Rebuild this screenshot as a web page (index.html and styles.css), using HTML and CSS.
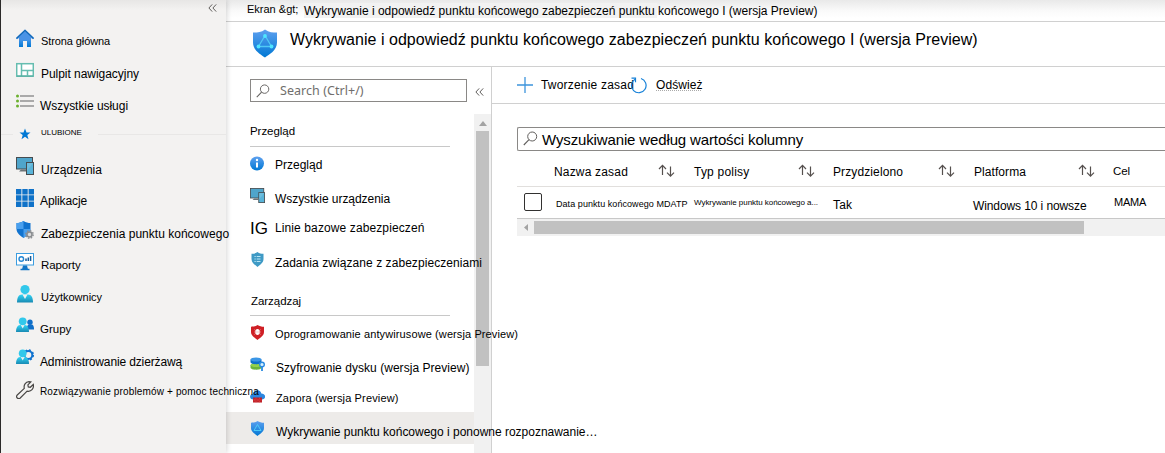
FILE: index.html
```html
<!DOCTYPE html>
<html lang="pl">
<head>
<meta charset="utf-8">
<title>Wykrywanie i odpowiedź punktu końcowego</title>
<link rel="stylesheet" href="styles.css">
</head>
<body>
<svg class="defs" width="0" height="0">
  <defs>
    <linearGradient id="blue" x1="0" y1="0" x2="0" y2="1"><stop offset="0" stop-color="#5ea0ef"/><stop offset="1" stop-color="#0078d4"/></linearGradient>
    <linearGradient id="cyan" x1="0" y1="0" x2="0" y2="1"><stop offset="0" stop-color="#32d4f5"/><stop offset="1" stop-color="#198ab3"/></linearGradient>
    <symbol id="devices" viewBox="0 0 18 18"><rect x="0.500" y="0.500" width="16" height="11.500" fill="#4fa5cb" stroke="#454c50"/><path d="M5 12.500h5v2H3z" fill="#6c7478"/><rect x="10.500" y="5.500" width="7" height="12" fill="#59b4d9" stroke="#454c50"/><path d="M11 6h6L11 14z" fill="#83c8e4" opacity=".5"/></symbol>
    <symbol id="edr" viewBox="0 0 24 28"><path d="M12 0C8 3 4 3 0 3v10c0 8 8 12 12 15 4-3 12-7 12-15V3C20 3 16 3 12 0z" fill="url(#blue)"/><path d="M12 6L5.500 17h13z" fill="none" stroke="#50c8f5" stroke-width="1.300"/><circle cx="12" cy="6.500" r="1.900" fill="#50e6ff"/><circle cx="5.500" cy="17" r="1.900" fill="#50e6ff"/><circle cx="18.500" cy="17" r="1.900" fill="#50e6ff"/></symbol>
    <symbol id="edr-small" viewBox="0 0 15 15"><path d="M7.500 0C5.500 1.400 3.500 1.700 1 1.700V7c0 4 4.500 6 6.500 8 2-2 6.500-4 6.500-8V1.700c-2.500 0-4.500-.3-6.500-1.700z" fill="url(#blue)"/><path d="M7.500 3.500L4 9.500h7z" fill="none" stroke="#50d0fa" stroke-width=".9"/></symbol>
    <symbol id="lens" viewBox="0 0 15 15"><circle cx="9.200" cy="5.500" r="4.500" fill="none" stroke="#605e5c"/><path d="M6 8.700L.8 14" stroke="#605e5c" stroke-width="1.100"/></symbol>
    <symbol id="sort" viewBox="0 0 17 14"><path d="M4.500 11V1.500M1 5l3.500-3.700L8 5M12.500 2.500V12M9 8.600l3.500 3.600L16 8.600" fill="none" stroke="#55504e" stroke-width="1.200"/></symbol>
    <symbol id="chev" viewBox="0 0 9 8"><path d="M4.200.4L.9 4l3.300 3.600M8.200.4L4.900 4l3.300 3.600" fill="none" stroke="#605e5c"/></symbol>
  </defs>
</svg>
<div class="app">
  <nav class="side">
    <div class="side-top"><svg class="collapse"><use href="#chev"/></svg></div>
    <a class="nav"><svg class="ic" viewBox="0 0 18 18"><path d="M3 8h12v10h-4v-6H7v6H3z" fill="url(#blue)"/><path d="M9 .5L0 9l1 1.200L3 9v2h12V9l2 1.200L18 9z" fill="#4a93e6"/><path d="M.4 9.500L9 1.300l8.600 8.200" fill="none" stroke="#1268b5" stroke-width="1.300"/></svg><span class="tx n1">Strona główna</span></a>
    <a class="nav"><svg class="ic" viewBox="0 0 18 18"><rect x=".7" y="2.700" width="16.600" height="12.500" fill="#fff" stroke="#65bdb0" stroke-width="1.500"/><path d="M5.500 3v12M6 9.500h11M11.500 9.500v5" stroke="#65bdb0" stroke-width="1.500"/><path d="M1 15h16" stroke="#51a99c"/></svg><span class="tx n2">Pulpit nawigacyjny</span></a>
    <a class="nav"><svg class="ic" viewBox="0 0 18 18"><path d="M4 4h14M4 9h14M4 14h14" transform="translate(0 -1)" stroke="#939393" stroke-width="1.400"/><g fill="#6bb02e"><circle cx="1.500" cy="3" r="1.500"/><circle cx="1.500" cy="8" r="1.500"/><circle cx="1.500" cy="13" r="1.500"/></g></svg><span class="tx n3">Wszystkie usługi</span></a>
    <div class="nav fav"><i class="fav-line start"></i><svg class="ic star" viewBox="0 0 12 12"><path d="M6 .5l1.500 4h4L8.300 7l1.200 4.200L6 8.700l-3.500 2.500L3.700 7 .5 4.500h4z" fill="#0078d4"/></svg><span class="tx n4">ULUBIONE</span><i class="fav-line"></i></div>
    <a class="nav"><svg class="ic"><use href="#devices"/></svg><span class="tx n5">Urządzenia</span></a>
    <a class="nav"><svg class="ic" viewBox="0 0 18 18"><path d="M0 0h5.400v5.400H0zM6.300 0h5.400v5.400H6.300zM12.600 0H18v5.400h-5.400zM0 6.300h5.400v5.400H0zM6.300 6.300h5.400v5.400H6.300zM12.600 6.300H18v5.400h-5.400zM0 12.600h5.400V18H0zM6.300 12.600h5.400V18H6.300zM12.600 12.600H18V18h-5.400z" fill="#0f72c8"/></svg><span class="tx n6">Aplikacje</span></a>
    <a class="nav"><svg class="ic" viewBox="0 0 18 18"><path d="M7.500 0C5 1.600 3 2 .5 2v6c0 4.500 4.500 7 7 9 2.500-2 7-4.500 7-9V2C12 2 10 1.600 7.500 0z" fill="#1173cf"/><path d="M7.500 0C5 1.600 3 2 .5 2v6h7zM7.500 8h7c0 4.500-4.500 7-7 9z" fill="#4aa0ee"/><circle cx="13.500" cy="13.500" r="2.500" fill="#dcdcdc" stroke="#8b8e91" stroke-width="1.600"/><circle cx="13.500" cy="13.500" r="3.700" fill="none" stroke="#8b8e91" stroke-width="1.400" stroke-dasharray="1.500 1.400"/></svg><span class="tx n7">Zabezpieczenia punktu końcowego</span></a>
    <a class="nav"><svg class="ic" viewBox="0 0 18 18"><rect x=".5" y=".5" width="17" height="11.500" fill="#fff" stroke="#3b9de0"/><path d="M7 12.500h4l1 4H6z" fill="#1175c6"/><path d="M4.500 16.500h9" stroke="#1175c6" stroke-width="1.500"/><circle cx="5.300" cy="6" r="2.300" fill="none" stroke="#2487d4" stroke-width="1.400"/><path d="M10 8V5.500M12.300 8V4.500M14.600 8V3" stroke="#155d9c" stroke-width="1.500"/></svg><span class="tx n8">Raporty</span></a>
    <a class="nav"><svg class="ic" viewBox="0 0 18 18"><path d="M1 17.500c0-5 1.500-8 5-8h6c3.500 0 5 3 5 8z" fill="url(#cyan)"/><path d="M6.500 9.500L9 14l2.500-4.500z" fill="#f3f2f1"/><circle cx="9" cy="4.600" r="4.600" fill="#32c8eb"/></svg><span class="tx n9">Użytkownicy</span></a>
    <a class="nav"><svg class="ic" viewBox="0 0 18 18"><path d="M10.500 12.500c0-3 1-5 3-5h2c2 0 2.500 2 2.500 5z" fill="#0f6fc9"/><circle cx="14" cy="5.200" r="2.700" fill="#0f6fc9"/><path d="M0 15c0-4 1.500-7 4-7h5c2.500 0 4 3 4 7z" fill="url(#cyan)"/><path d="M4.800 8l1.900 3.500L8.600 8z" fill="#f3f2f1"/><circle cx="6.700" cy="4.300" r="3.900" fill="#32c8eb"/></svg><span class="tx n10">Grupy</span></a>
    <a class="nav"><svg class="ic" viewBox="0 0 18 18"><circle cx="12.300" cy="6" r="4" fill="none" stroke="#1173cf" stroke-width="2"/><circle cx="12.300" cy="6" r="5" fill="none" stroke="#1173cf" stroke-width="1.500" stroke-dasharray="2 1.930"/><path d="M0 15c0-4 1.500-7 4-7h5c2.500 0 4 3 4 7z" fill="url(#cyan)"/><path d="M4.800 8l1.900 3.500L8.600 8z" fill="#f3f2f1"/><circle cx="6.700" cy="4.300" r="3.900" fill="#32c8eb"/></svg><span class="tx n11">Administrowanie dzierżawą</span></a>
    <a class="nav"><svg class="ic" viewBox="0 0 18 18"><path d="M1 14.300L8.300 7.400C7.500 4 9.500.8 13 .6l1.800.3-2.900 3 .4 2 2 .4 3-2.800c.9 4-2.200 7.600-6.200 6.600L4 17.200c-2 1.400-4.400-1-3-2.900z" fill="none" stroke="#484644" stroke-width="1.200"/></svg><span class="tx n12">Rozwiązywanie problemów + pomoc techniczna</span></a>
  </nav>
  <div class="page">
    <header class="crumbs"><span class="tx c1">Ekran &amp;gt;</span><span class="tx c2">Wykrywanie i odpowiedź punktu końcowego zabezpieczeń punktu końcowego I (wersja Preview)</span></header>
    <div class="title"><svg class="title-ic"><use href="#edr"/></svg><h1 class="tx h">Wykrywanie i odpowiedź punktu końcowego zabezpieczeń punktu końcowego I (wersja Preview)</h1></div>
    <div class="body">
      <aside class="menu">
        <div class="menu-search"><div class="search"><svg class="lens"><use href="#lens"/></svg><span class="tx ph">Search (Ctrl+/)</span></div><svg class="collapse"><use href="#chev"/></svg></div>
        <div class="menu-main">
          <div class="list">
            <div class="sect"><span class="tx s1">Przegląd</span></div>
            <a class="item"><svg class="mi" viewBox="0 0 15 15"><circle cx="7" cy="7.500" r="7" fill="url(#blue)"/><path d="M7 6.500v5" stroke="#fff" stroke-width="2"/><circle cx="7" cy="4" r="1.200" fill="#fff"/></svg><span class="tx m1">Przegląd</span></a>
            <a class="item"><svg class="mi"><use href="#devices"/></svg><span class="tx m2">Wszystkie urządzenia</span></a>
            <a class="item"><span class="ig">IG</span><span class="tx m3">Linie bazowe zabezpieczeń</span></a>
            <a class="item"><svg class="mi" viewBox="0 0 15 15"><path d="M7.500 0C5.500 1.500 4 1.800 1.500 1.800V7c0 4 4 6 6 8 2-2 6-4 6-8V1.800C11 1.800 9.500 1.500 7.500 0z" fill="#3f9ac5"/><path d="M4.500 4.500h1.200m1 0h3.800M4.500 7h1.200m1 0h3.800M4.500 9.500h1.200m1 0h3.800" stroke="#b9e6f5" stroke-width="1.100"/></svg><span class="tx m4">Zadania związane z zabezpieczeniami</span></a>
            <div class="sect second"><span class="tx s2">Zarządzaj</span></div>
            <a class="item low"><svg class="mi" viewBox="0 0 15 15"><path d="M7.500 0C5.500 1.400 3.500 1.700 1 1.700V7c0 4 4.500 6 6.500 8 2-2 6.500-4 6.500-8V1.700c-2.500 0-4.500-.3-6.500-1.700z" fill="#cf1f25"/><ellipse cx="7.500" cy="7" rx="2.200" ry="3" fill="#fff"/><path d="M4.300 4.500l6.400 5M10.700 4.500l-6.400 5M4 7h7" stroke="#f6c9c9" stroke-width=".5"/></svg><span class="tx m5">Oprogramowanie antywirusowe (wersja Preview)</span></a>
            <a class="item low"><svg class="mi" viewBox="0 0 15 15"><path d="M.5 8v2.500c0 3 11 3 11 0V8z" fill="#6bb53a"/><ellipse cx="6" cy="8" rx="5.500" ry="2" fill="#94d04c"/><path d="M.5 2.500V5c0 3 11 3 11 0V2.500z" fill="#0f6fc9"/><ellipse cx="6" cy="2.500" rx="5.500" ry="2" fill="#3b96e6"/><circle cx="12" cy="7.500" r="2.300" fill="#d8f1ff" stroke="#2b8be0" stroke-width="1.400"/><path d="M12 9.500V14" stroke="#2b8be0" stroke-width="1.800"/></svg><span class="tx m6">Szyfrowanie dysku (wersja Preview)</span></a>
            <a class="item low"><svg class="mi" viewBox="0 0 15 15"><path d="M3.500 10.500C-1 10.500-1 5 3 5 3.500.2 10.500 0 11.300 4.500c5 0 5 6 .7 6z" fill="#2b86df"/><path d="M3 8.500h9v5H3z" fill="#b81920"/><path d="M3 10.200h9M3 11.900h9M6 8.500v1.700M9.500 8.500v1.700M4.800 10.200v1.700M8 10.200v1.700M6 11.900v1.600M9.500 11.900v1.600" stroke="#e94f52" stroke-width=".5"/></svg><span class="tx m7">Zapora (wersja Preview)</span></a>
            <a class="item low on"><svg class="mi"><use href="#edr-small"/></svg><span class="tx m8">Wykrywanie punktu końcowego i ponowne rozpoznawanie…</span></a>
          </div>
          <div class="vbar"><i class="up"></i><i class="vthumb"></i></div>
        </div>
      </aside>
      <main class="pane">
        <div class="tools">
          <svg class="plus" viewBox="0 0 16 16"><path d="M8 0v16M0 8h16" stroke="#3d94dc" stroke-width="1.300"/></svg><span class="tx b1">Tworzenie zasad</span>
          <svg class="reload" viewBox="0 0 17 17"><path d="M11 1.500A7.300 7.300 0 1 1 5 2.200" fill="none" stroke="#1580d8" stroke-width="1.200"/><path d="M1.500 1.200h4v4" fill="none" stroke="#1580d8" stroke-width="1.200"/></svg><span class="tx b2">Odśwież</span>
        </div>
        <div class="grid">
          <div class="filter"><svg class="lens"><use href="#lens"/></svg><span class="tx f">Wyszukiwanie według wartości kolumny</span></div>
          <div class="tr th"><span></span>
            <div class="td"><span class="tx t1">Nazwa zasad</span><svg class="sort"><use href="#sort"/></svg></div>
            <div class="td"><span class="tx t2">Typ polisy</span><svg class="sort"><use href="#sort"/></svg></div>
            <div class="td"><span class="tx t3">Przydzielono</span><svg class="sort"><use href="#sort"/></svg></div>
            <div class="td"><span class="tx t4">Platforma</span><svg class="sort"><use href="#sort"/></svg></div>
            <div class="td"><span class="tx t5">Cel</span></div>
          </div>
          <div class="tr row"><span class="check"></span>
            <div class="td"><span class="tx r1">Data punktu końcowego MDATP</span></div>
            <div class="td"><span class="tx r2">Wykrywanie punktu końcowego a...</span></div>
            <div class="td"><span class="tx r3">Tak</span></div>
            <div class="td"><span class="tx r4">Windows 10 i nowsze</span></div>
            <div class="td"><span class="tx r5">MAMA</span></div>
          </div>
          <div class="hbar"><i class="left"></i><i class="hthumb"></i></div>
        </div>
      </main>
    </div>
  </div>
</div>
</body>
</html>
```
FILE: styles.css
```css
* { box-sizing: border-box; }
body { margin: 0; background: #fff; color: #000; font: 12px/16px "Liberation Sans", Arial, sans-serif; }
.defs { display: block; height: 0; }
.app { display: grid; grid-template-columns: 226px 939px; width: 1165px; height: 453px; overflow: hidden; }
.tx { white-space: pre; flex: none; display: block; }
svg { flex: none; display: block; }
.collapse { width: 9px; height: 8px; }

/* Sidebar */
.side { position: relative; z-index: 2; background: linear-gradient(#e7e6e5, #f3f2f1 10px); border-left: 1px solid #2b2a29; box-shadow: 1px 0 5px rgba(0,0,0,.16); }
.side-top { height: 22px; padding: 4px 0 0 207px; }
.nav { display: flex; height: 32px; padding-left: 15px; }
.ic { width: 18px; height: 18px; margin: 7px 6px 0 0; }
.nav .tx { margin-top: 11px; padding-left: 1px; }
.nav .n1 { font-size: 11px; letter-spacing: -.1px; }
.nav .n2 { margin-top: 12px; letter-spacing: -.04px; }
.nav .n3 { margin-top: 12px; padding-left: 0; letter-spacing: -.043px; }
.nav .n4 { font-size: 8px; margin-top: 7px; }
.nav .n5 { margin-top: 12px; letter-spacing: .03px; }
.nav .n6 { padding-left: 0; letter-spacing: -.115px; }
.nav .n7 { margin-top: 12px; letter-spacing: .02px; }
.nav .n8 { font-size: 11.5px; letter-spacing: -.1px; }
.nav .n9 { font-size: 11px; }
.nav .n10 { font-size: 11.5px; padding-left: 0; }
.nav .n11 { margin-top: 12px; padding-left: 0; letter-spacing: -.136px; }
.nav .n12 { font-size: 10px; margin-top: 10px; padding-left: 0; letter-spacing: .15px; }
.fav { padding-left: 0; }
.nav .star { width: 12px; height: 12px; margin: 10px 9px 0 6px; }
.fav-line { flex: 1; height: 1px; background: #e8e7e6; margin: 16px 0 0 16px; }
.start { flex: none; width: 12px; margin-left: 0; }

/* Page header */
.page { display: flex; flex-direction: column; }
.crumbs { display: flex; height: 22px; border-bottom: 1px solid #d0d0d0; background: linear-gradient(#e9e9e9, #fafafa 11px, #fff 18px); padding-left: 21px; }
.c1 { margin-top: 1px; width: 57px; font-size: 11px; }
.c2 { height: 15px; margin-top: 3px; background: linear-gradient(90deg, #f2f2f2 353px, transparent 353px); }
.title { display: flex; height: 45px; border-bottom: 1px solid #d0d0d0; padding: 7px 0 0 27px; }
.title-ic { width: 24px; height: 29px; margin-right: 13px; }
.h { margin: 0; font-size: 16px; font-weight: 400; line-height: 22px; letter-spacing: .035px; }
.body { display: flex; height: 386px; }

/* Blade menu */
.menu { width: 266px; border-right: 1px solid #d0d0d0; }
.menu-search { display: flex; height: 47px; padding: 12px 0 0 24px; }
.menu-search .collapse { margin: 9px 0 0 8px; }
.search { display: flex; width: 217px; height: 23px; border: 1px solid #8a8886; padding-left: 5px; }
.search .lens { width: 14px; height: 14px; margin: 4px 10px 0 0; }
.ph { font: 12.5px/16px "Noto Sans", sans-serif; color: #706e6c; margin-top: 3px; letter-spacing: .05px; }
.menu-main { display: flex; height: 339px; }
.list { position: relative; z-index: 1; width: 248px; }
.sect { width: 200px; height: 33px; margin: 0 0 1px 24px; border-bottom: 1px solid #c8c8c8; padding-top: 9px; }
.second { height: 40px; margin-bottom: 0; padding: 17px 0 0 1px; }
.s1, .s2 { font-size: 11.5px; letter-spacing: -.05px; }
.item { display: flex; height: 32px; padding-left: 24px; }
.mi { width: 15px; height: 15px; margin: 8px 10px 0 0; }
.item .tx { margin-top: 9px; }
.m2 { padding-top: 2px; letter-spacing: -.052px; }
.item .m3 { margin-top: 8px; letter-spacing: .109px; }
.m4 { padding-top: 2px; letter-spacing: .063px; }
.low .mi { margin-top: 9px; }
.low .tx { margin-top: 10px; }
.m5 { font-size: 11px; letter-spacing: .105px; }
.m6 { padding: 2px 0 0 1px; letter-spacing: .042px; }
.m7 { padding-left: 1px; font-size: 11px; letter-spacing: .145px; }
.m8 { padding: 2px 0 0 1px; letter-spacing: -.011px; }
.ig { width: 25px; font-size: 17px; line-height: 20px; margin-top: 7px; }
.on { background: #edebe9; }
.vbar { width: 17px; background: #f1f1f1; padding: 7px 2px 0; }
.up { display: block; width: 8px; height: 5px; margin: 0 3px 5px; background: #a3a3a3; clip-path: polygon(50% 0, 100% 100%, 0 100%); }
.vthumb { display: block; height: 235px; background: #c1c1c1; }

/* Policy list */
.pane { width: 673px; }
.tools { display: flex; height: 37px; border-bottom: 1px solid #d0d0d0; padding: 10px 0 0 25px; }
.plus { width: 16px; height: 16px; margin-right: 8px; }
.b1 { width: 89px; letter-spacing: .197px; }
.reload { width: 17px; height: 17px; margin-right: 9px; }
.b2 { letter-spacing: .1px; text-decoration: underline dotted #aaa 1px; text-underline-offset: 1px; }
.grid { padding: 23px 0 0 25px; }
.filter { display: flex; height: 24px; border: 1px solid #8a8886; border-right: 0; border-radius: 2px 0 0 2px; padding-left: 5px; }
.filter .lens { width: 15px; height: 15px; margin: 3px 4px 0 0; }
.f { font-size: 15px; line-height: 18px; margin-top: 3px; letter-spacing: -.133px; }
.tr { display: grid; grid-template-columns: 37px repeat(4, 140px) 1fr; }
.td { display: flex; }
.th { height: 36px; border-bottom: 1px solid #e1dfdd; padding-top: 13px; }
.th .td { justify-content: space-between; padding-right: 19px; }
.sort { width: 17px; height: 14px; }
.t1 { letter-spacing: .178px; }
.t2 { letter-spacing: .214px; }
.t3 { letter-spacing: .108px; margin-left: -1px; }
.t4 { letter-spacing: .071px; }
.t5 { font-size: 11.5px; margin: -1px 0 0 -1px; letter-spacing: -.1px; }
.row { height: 32px; border-bottom: 1px solid #c8c8c8; padding-top: 6px; }
.check { width: 18px; height: 18px; margin-left: 7px; border: 1px solid #323130; border-radius: 2px; }
.r1 { font-size: 9px; margin: 3px 0 0 2px; letter-spacing: .06px; }
.r2 { font-size: 8px; margin-top: 2px; letter-spacing: -.04px; }
.r3 { margin: 4px 0 0 -1px; letter-spacing: .2px; }
.r4 { margin: 5px 0 0 -1px; letter-spacing: -.1px; }
.r5 { font-size: 11px; margin-top: 1px; letter-spacing: -.25px; }
.hbar { display: flex; height: 17px; background: #f1f1f1; padding: 2px 0; }
.left { width: 4px; height: 7px; margin: 3px 6px 0 7px; background: #a3a3a3; clip-path: polygon(100% 0, 100% 100%, 0 50%); }
.hthumb { width: 550px; background: #c1c1c1; }
```
